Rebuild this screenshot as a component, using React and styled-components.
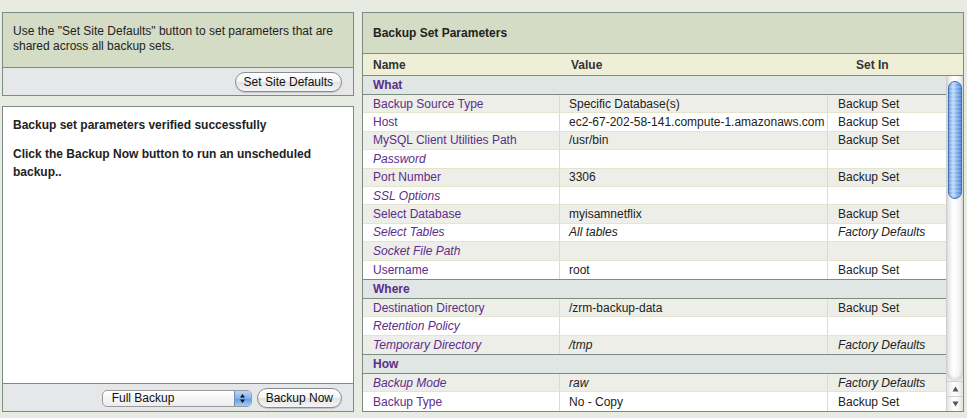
import styled, { createGlobalStyle } from "styled-components";

const GlobalStyle = createGlobalStyle`
  html, body {
    margin: 0;
    padding: 0;
    background: #e7ebe1;
  }
  body {
    font-family: "Liberation Sans", Arial, sans-serif;
    font-size: 12px;
    color: #222;
  }
`;

const groups = [
  {
    label: "What",
    rows: [
      { name: "Backup Source Type", value: "Specific Database(s)", setIn: "Backup Set" },
      { name: "Host", value: "ec2-67-202-58-141.compute-1.amazonaws.com", setIn: "Backup Set" },
      { name: "MySQL Client Utilities Path", value: "/usr/bin", setIn: "Backup Set" },
      { name: "Password", value: "", setIn: "" },
      { name: "Port Number", value: "3306", setIn: "Backup Set" },
      { name: "SSL Options", value: "", setIn: "" },
      { name: "Select Database", value: "myisamnetflix", setIn: "Backup Set" },
      { name: "Select Tables", value: "All tables", setIn: "Factory Defaults" },
      { name: "Socket File Path", value: "", setIn: "" },
      { name: "Username", value: "root", setIn: "Backup Set" },
    ],
  },
  {
    label: "Where",
    rows: [
      { name: "Destination Directory", value: "/zrm-backup-data", setIn: "Backup Set" },
      { name: "Retention Policy", value: "", setIn: "" },
      { name: "Temporary Directory", value: "/tmp", setIn: "Factory Defaults" },
    ],
  },
  {
    label: "How",
    rows: [
      { name: "Backup Mode", value: "raw", setIn: "Factory Defaults" },
      { name: "Backup Type", value: "No - Copy", setIn: "Backup Set" },
    ],
  },
];

const App = () => {
  return (
    <Page>
      <GlobalStyle />
      <LeftColumn>
        <Box>
          <InfoText>
            Use the "Set Site Defaults" button to set parameters that are
            shared across all backup sets.
          </InfoText>
          <ButtonBar>
            <PillButton>Set Site Defaults</PillButton>
          </ButtonBar>
        </Box>
        <Box $grow>
          <Message>
            <p>Backup set parameters verified successfully</p>
            <p>Click the Backup Now button to run an unscheduled backup..</p>
          </Message>
          <ButtonBar>
            <Select>
              <span>Full Backup</span>
              <Stepper>
                <svg width="7" height="11" viewBox="0 0 7 11">
                  <path d="M3.5 1 L6 4.5 L1 4.5 Z" fill="#111" />
                  <path d="M3.5 10 L6 6.5 L1 6.5 Z" fill="#111" />
                </svg>
              </Stepper>
            </Select>
            <PillButton>Backup Now</PillButton>
          </ButtonBar>
        </Box>
      </LeftColumn>

      <Panel>
        <PanelTitle>Backup Set Parameters</PanelTitle>
        <ColumnHeader>
          <span>Name</span>
          <span>Value</span>
          <span>Set In</span>
        </ColumnHeader>
        <ScrollArea>
          <Rows>
            {groups.map((g) => (
              <div key={g.label}>
                <GroupRow>{g.label}</GroupRow>
                {g.rows.map((r, i) => {
                  const soft = r.setIn !== "Backup Set";
                  return (
                    <DataRow key={r.name} $shade={i % 2 === 0}>
                      <NameCell $italic={soft}>{r.name}</NameCell>
                      <Cell $italic={soft}>{r.value}</Cell>
                      <Cell $italic={soft} $last>
                        {r.setIn}
                      </Cell>
                    </DataRow>
                  );
                })}
              </div>
            ))}
          </Rows>
          <Scrollbar>
            <Track>
              <Thumb />
            </Track>
            <Arrow>
              <svg width="7" height="6" viewBox="0 0 7 6">
                <path d="M3.5 0.5 L6.5 5.5 L0.5 5.5 Z" fill="#555" />
              </svg>
            </Arrow>
            <Arrow>
              <svg width="7" height="6" viewBox="0 0 7 6">
                <path d="M3.5 5.5 L6.5 0.5 L0.5 0.5 Z" fill="#555" />
              </svg>
            </Arrow>
          </Scrollbar>
        </ScrollArea>
      </Panel>
    </Page>
  );
};

const Page = styled.div`
  display: flex;
  gap: 8px;
  padding: 12px 3px 6px 2px;
  height: 418px;
  box-sizing: border-box;
`;

const LeftColumn = styled.div`
  width: 352px;
  display: flex;
  flex-direction: column;
  gap: 10px;
`;

const Box = styled.div`
  border: 1px solid #7c8c84;
  display: flex;
  flex-direction: column;
  background: ${(p) => (p.$grow ? "#fff" : "#d4dcc5")};
  flex: ${(p) => (p.$grow ? "1" : "0 0 auto")};
`;

const InfoText = styled.div`
  padding: 11px 10px 12px 10px;
  line-height: 15px;
  height: 31px;
`;

const ButtonBar = styled.div`
  display: flex;
  justify-content: flex-end;
  align-items: center;
  gap: 5px;
  height: 27px;
  padding-right: 11px;
  background: #e6e7e9;
  border-top: 1px solid #7c8c84;
`;

const PillButton = styled.button`
  font-family: "Liberation Sans", Arial, sans-serif;
  font-size: 12px;
  color: #111;
  height: 20px;
  padding: 0 8px;
  border: 1px solid #8c8c8c;
  border-radius: 10px;
  background: linear-gradient(#ffffff 0%, #f4f4f4 50%, #e2e2e2 51%, #f6f6f6 100%);
  box-shadow: 0 1px 1px rgba(0, 0, 0, 0.15);
  cursor: pointer;
`;

const Select = styled.div`
  width: 150px;
  height: 17px;
  box-sizing: border-box;
  border: 1px solid #9a9a9a;
  border-radius: 5px;
  background: linear-gradient(#ffffff, #ececec);
  display: flex;
  align-items: center;
  justify-content: space-between;
  padding-left: 9px;
  overflow: hidden;
  font-size: 12px;
  color: #111;
  margin-top: 1px;
`;

const Stepper = styled.div`
  width: 16px;
  height: 100%;
  display: flex;
  align-items: center;
  justify-content: center;
  background: linear-gradient(#bcd6f5 0%, #7fb1ec 50%, #5b9be6 51%, #a6cdf6 100%);
  border-left: 1px solid #6e8fb8;
`;

const Message = styled.div`
  flex: 1;
  padding: 9px 10px 7px 10px;
  font-weight: bold;
  line-height: 18px;
  p {
    margin: 0 0 11px 0;
  }
`;

const Panel = styled.div`
  flex: 1;
  border: 1px solid #7c8c84;
  display: flex;
  flex-direction: column;
  background: #fff;
`;

const PanelTitle = styled.div`
  height: 40px;
  background: #d4dcc5;
  display: flex;
  align-items: center;
  padding-left: 10px;
  font-weight: bold;
  color: #222;
  border-bottom: 1px solid #7c8c84;
`;

const ColumnHeader = styled.div`
  height: 21px;
  background: #efefd8;
  border-bottom: 1px solid #7c8c84;
  display: grid;
  grid-template-columns: 198px 285px 1fr;
  align-items: center;
  padding-left: 10px;
  font-weight: bold;
  color: #333;
`;

const ScrollArea = styled.div`
  flex: 1;
  display: flex;
  min-height: 0;
`;

const Rows = styled.div`
  flex: 1;
  overflow: hidden;
`;

const GroupRow = styled.div`
  height: 19px;
  box-sizing: border-box;
  padding-left: 10px;
  display: flex;
  align-items: center;
  font-weight: bold;
  color: #5b2d8e;
  background: #dfe6e3;
  border-bottom: 1px solid #7c8c84;
  div + div > & {
    border-top: 1px solid #7c8c84;
    height: 20px;
  }
`;

const DataRow = styled.div`
  display: grid;
  grid-template-columns: 196px 268px 1fr;
  height: 18.4px;
  box-sizing: border-box;
  background: ${(p) => (p.$shade ? "#edeee7" : "#ffffff")};
  border-bottom: 1px solid #e4e4cf;
  &:last-child {
    border-bottom: none;
  }
`;

const Cell = styled.div`
  display: flex;
  align-items: center;
  padding-left: ${(p) => (p.$last ? "10px" : "9px")};
  border-left: 1px solid #dcdcc8;
  font-style: ${(p) => (p.$italic ? "italic" : "normal")};
  color: #222;
  white-space: nowrap;
  overflow: hidden;
`;

const NameCell = styled(Cell)`
  border-left: none;
  padding-left: 10px;
  color: #5b2d8e;
`;

const Scrollbar = styled.div`
  width: 16px;
  display: flex;
  flex-direction: column;
  background: linear-gradient(90deg, #e4e4e4, #ffffff 40%, #f7f7f7 70%, #e0e0e0);
  border-left: 1px solid #cfcfcf;
`;

const Track = styled.div`
  flex: 1;
  padding: 5px 1px 0 1px;
  border-bottom-left-radius: 8px;
  border-bottom-right-radius: 8px;
  box-shadow: inset 0 -3px 3px rgba(0, 0, 0, 0.12);
`;

const Thumb = styled.div`
  height: 118px;
  border-radius: 7px;
  border: 1px solid #3d6fb8;
  box-sizing: border-box;
  background: repeating-linear-gradient(
      180deg,
      rgba(255, 255, 255, 0.18) 0px,
      rgba(255, 255, 255, 0.18) 2px,
      rgba(255, 255, 255, 0) 2px,
      rgba(255, 255, 255, 0) 4px
    ),
    linear-gradient(90deg, #6b9ee0, #c4dbf7 35%, #8ab7ee 60%, #4d86d6);
`;

const Arrow = styled.div`
  height: 14px;
  display: flex;
  align-items: center;
  justify-content: center;
  border-top: 1px solid #d0d0d0;
`;

export default App;
